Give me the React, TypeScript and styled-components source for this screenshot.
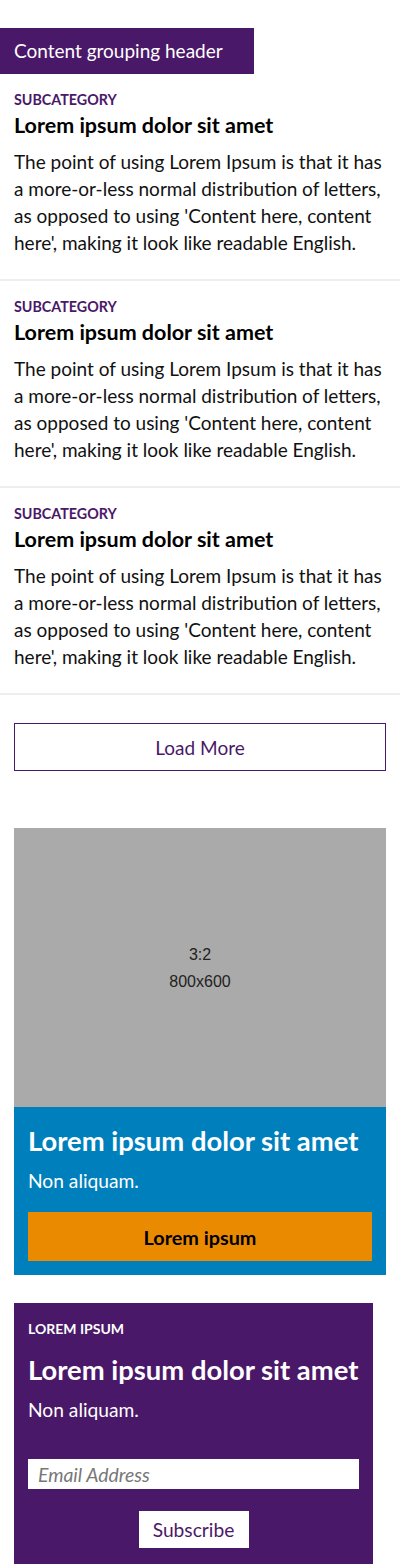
import React from "react";
import styled, { createGlobalStyle } from "styled-components";

const PURPLE = "#4a1868";
const FONT = `"Lato", "Open Sans", sans-serif`;

const GlobalStyle = createGlobalStyle`
  body {
    margin: 0;
    background: #fff;
    font-family: ${FONT};
    color: #111;
  }
  * {
    box-sizing: border-box;
  }
`;

interface Article {
  category: string;
  title: string;
  body: string;
}

const ARTICLE_TEXT =
  "The point of using Lorem Ipsum is that it has a more-or-less normal distribution of letters, as opposed to using 'Content here, content here', making it look like readable English.";

const articles: Article[] = [1, 2, 3].map(() => ({
  category: "Subcategory",
  title: "Lorem ipsum dolor sit amet",
  body: ARTICLE_TEXT,
}));

const App: React.FC = () => {
  return (
    <>
      <GlobalStyle />
      <SPage>
        <SGroupHeader>Content grouping header</SGroupHeader>
        <SList>
          {articles.map((a, i) => (
            <SItem key={i}>
              <SCategory>{a.category}</SCategory>
              <SItemTitle>{a.title}</SItemTitle>
              <SItemBody>{a.body}</SItemBody>
            </SItem>
          ))}
        </SList>
        <SSection>
          <SLoadMore type="button">Load More</SLoadMore>
        </SSection>
        <SSection $top={57}>
          <SPromo>
            <SPlaceholder>
              <span>3:2</span>
              <span>800x600</span>
            </SPlaceholder>
            <SPromoBody>
              <SCardTitle>Lorem ipsum dolor sit amet</SCardTitle>
              <SCardText>Non aliquam.</SCardText>
              <SCtaButton type="button">Lorem ipsum</SCtaButton>
            </SPromoBody>
          </SPromo>
        </SSection>
        <SSection $top={28}>
          <SNewsletter>
            <SEyebrow>Lorem ipsum</SEyebrow>
            <SCardTitle>Lorem ipsum dolor sit amet</SCardTitle>
            <SCardText>Non aliquam.</SCardText>
            <SEmailInput type="email" placeholder="Email Address" />
            <SSubscribe type="button">Subscribe</SSubscribe>
          </SNewsletter>
        </SSection>
      </SPage>
    </>
  );
};

const SPage = styled.div`
  padding-top: 28px;
`;

const SGroupHeader = styled.h2`
  display: inline-block;
  margin: 0;
  width: 254px;
  height: 46px;
  padding: 0 14px;
  background: ${PURPLE};
  color: #fff;
  font-size: 19px;
  font-weight: 400;
  line-height: 46px;
`;

const SList = styled.div`
  display: flex;
  flex-direction: column;
`;

const SItem = styled.article`
  padding: 17px 14px 23px;
  border-bottom: 2px solid #eeeeee;
`;

const SCategory = styled.div`
  color: ${PURPLE};
  font-size: 14.3px;
  font-weight: 700;
  line-height: 18px;
  text-transform: uppercase;
`;

const SItemTitle = styled.h3`
  margin: 3px 0 0;
  font-size: 21.5px;
  font-weight: 700;
  line-height: 26px;
  color: #000;
`;

const SItemBody = styled.p`
  margin: 10px 0 0;
  font-size: 19px;
  line-height: 27px;
  color: #111;
`;

const SSection = styled.div<{ $top?: number }>`
  padding: ${({ $top = 28 }) => $top}px 14px 0;
`;

const SLoadMore = styled.button`
  display: block;
  width: 100%;
  height: 48px;
  border: 1px solid ${PURPLE};
  background: #fff;
  color: ${PURPLE};
  font-family: ${FONT};
  font-size: 19px;
`;

const SPromo = styled.div`
  display: flex;
  flex-direction: column;
`;

const SPlaceholder = styled.div`
  display: flex;
  flex-direction: column;
  align-items: center;
  justify-content: center;
  height: 279px;
  background: #aaaaaa;
  color: #222;
  font-family: "Liberation Sans", Arial, sans-serif;
  font-size: 16px;
  line-height: 27px;
`;

const SPromoBody = styled.div`
  display: flex;
  flex-direction: column;
  padding: 17px 14px 14px;
  background: #007fbd;
  color: #fff;
`;

const SCardTitle = styled.h3`
  margin: 0;
  font-size: 27.4px;
  font-weight: 700;
  line-height: 34px;
  color: #fff;
`;

const SCardText = styled.p`
  margin: 9px 0 0;
  font-size: 19.2px;
  line-height: 27px;
  color: #fff;
`;

const SCtaButton = styled.button`
  margin-top: 18px;
  height: 49px;
  border: 0;
  background: #ea8a00;
  color: #000;
  font-family: ${FONT};
  font-size: 19.8px;
  font-weight: 700;
`;

const SNewsletter = styled.div`
  display: flex;
  flex-direction: column;
  width: 359px;
  padding: 17px 14px 16px;
  background: ${PURPLE};
  color: #fff;
`;

const SEyebrow = styled.div`
  margin-bottom: 15px;
  font-size: 14px;
  font-weight: 700;
  line-height: 18px;
  text-transform: uppercase;
`;

const SEmailInput = styled.input`
  margin-top: 36px;
  height: 30px;
  padding: 0 10px;
  border: 0;
  outline: none;
  background: #fff;
  font-family: ${FONT};
  font-size: 19.4px;
  &::placeholder {
    color: #777;
    font-style: italic;
  }
`;

const SSubscribe = styled.button`
  align-self: center;
  margin-top: 22px;
  width: 110px;
  height: 37px;
  border: 0;
  background: #fff;
  color: ${PURPLE};
  font-family: ${FONT};
  font-size: 19.2px;
`;

export default App;
